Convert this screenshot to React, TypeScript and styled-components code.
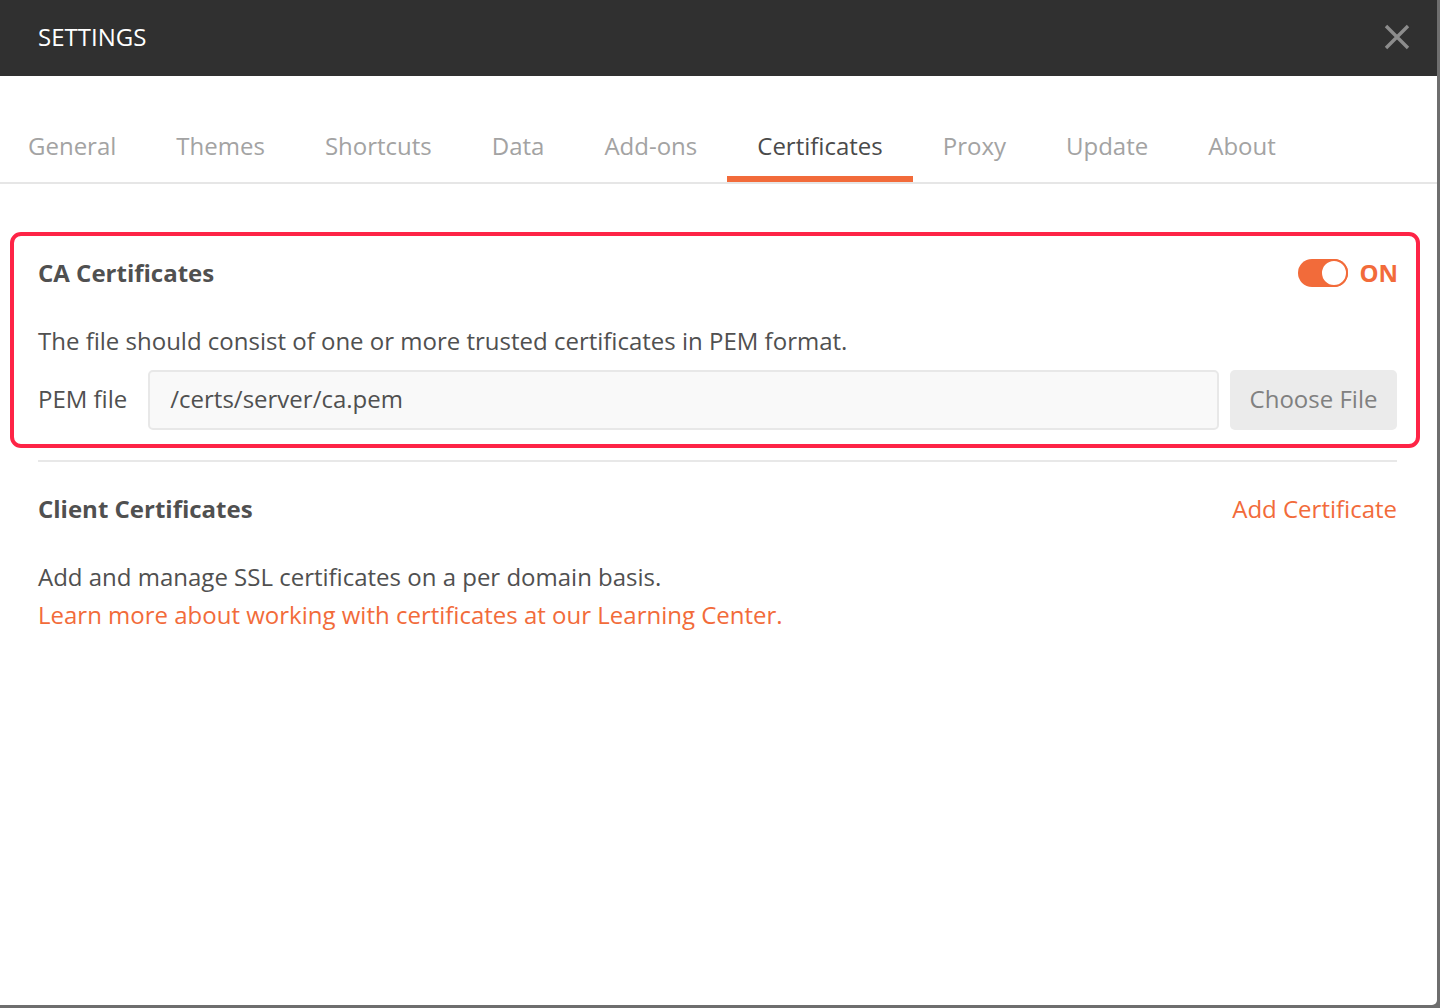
import React from "react";
import styled, { createGlobalStyle } from "styled-components";

const Global = createGlobalStyle`
  html, body { margin: 0; padding: 0; }
  body {
    background: #6e6e6e;
    font-family: "Open Sans", "Noto Sans", sans-serif;
    -webkit-font-smoothing: antialiased;
  }
  * { box-sizing: border-box; }
`;

const Dialog = styled.div`
  width: 1437px;
  height: 1005px;
  background: #ffffff;
  border-bottom-right-radius: 5px;
  display: flex;
  flex-direction: column;
  overflow: hidden;
`;

const Header = styled.header`
  height: 76px;
  background: #303030;
  display: flex;
  align-items: center;
  justify-content: space-between;
  padding: 0 27px 2px 38px;
`;

const Title = styled.h1`
  margin: 0;
  font-size: 24px;
  line-height: 32px;
  font-weight: 400;
  color: #ffffff;
`;

const CloseButton = styled.button`
  width: 26px;
  height: 26px;
  padding: 0;
  border: none;
  background: transparent;
  display: flex;
  align-items: center;
  justify-content: center;
  cursor: pointer;
`;

const TabBar = styled.nav`
  height: 108px;
  display: flex;
  align-items: flex-end;
  padding-left: 0;
  border-bottom: 2px solid #e6e6e6;
`;

const Tab = styled.div<{ $active?: boolean }>`
  padding: 0 30px 15px;
  font-size: 24px;
  line-height: 30px;
  color: ${(p) => (p.$active ? "#4a4a4a" : "#a3a3a3")};
  border-bottom: 6px solid ${(p) => (p.$active ? "#f26b3a" : "transparent")};
  white-space: nowrap;
  cursor: pointer;
  &:first-child {
    margin-left: -2px;
  }
`;

const Content = styled.main`
  padding: 48px 40px 0 38px;
  display: flex;
  flex-direction: column;
  color: #505050;
  font-size: 24px;
`;

const Highlight = styled.section`
  margin: 0 -23px 0 -28px;
  padding: 22px 19px 14px 24px;
  border: 4px solid #fe2446;
  border-radius: 11px;
  display: flex;
  flex-direction: column;
`;

const SectionHead = styled.div`
  display: flex;
  align-items: center;
  justify-content: space-between;
  height: 30px;
`;

const SectionTitle = styled.h2`
  margin: 0;
  font-size: 24px;
  line-height: 30px;
  font-weight: 700;
  color: #505050;
`;

const ToggleWrap = styled.div`
  display: flex;
  align-items: center;
  gap: 11px;
  margin-right: -1px;
`;

const Track = styled.div`
  width: 50px;
  height: 28px;
  border-radius: 14px;
  background: #f26b3a;
  display: flex;
  justify-content: flex-end;
  align-items: center;
`;

const Knob = styled.div`
  width: 28px;
  height: 28px;
  border-radius: 50%;
  background: #ffffff;
  border: 2px solid #f26b3a;
`;

const ToggleLabel = styled.span`
  font-size: 24px;
  line-height: 30px;
  font-weight: 700;
  color: #f26b3a;
`;

const Paragraph = styled.p<{ $top: number }>`
  margin: ${(p) => p.$top}px 0 0;
  font-size: 24px;
  line-height: 30px;
  color: #505050;
`;

const FileRow = styled.div`
  margin-top: 14px;
  display: flex;
  align-items: center;
  height: 60px;
`;

const FieldLabel = styled.label`
  font-size: 24px;
  line-height: 30px;
  color: #505050;
  margin-right: 21px;
  padding-bottom: 3px;
  white-space: nowrap;
`;

const PathInput = styled.div`
  flex: 1;
  height: 60px;
  background: #f9f9f9;
  border: 2px solid #e8e8e8;
  border-radius: 5px;
  display: flex;
  align-items: center;
  padding: 0 0 3px 20px;
  font-size: 24px;
  color: #505050;
`;

const ChooseButton = styled.button`
  margin-left: 11px;
  height: 60px;
  width: 167px;
  border: none;
  border-radius: 5px;
  background: #ebebeb;
  color: #808080;
  font-family: inherit;
  font-size: 24px;
  padding: 0 0 3px;
  cursor: pointer;
`;

const Divider = styled.hr`
  margin: 12px 0 0;
  border: none;
  height: 2px;
  background: #e8e8e8;
`;

const ClientHead = styled(SectionHead)`
  margin-top: 32px;
`;

const TextBlock = styled.div`
  margin-top: 34px;
  font-size: 24px;
  line-height: 38px;
  color: #505050;
`;

const Link = styled.a`
  color: #f26b3a;
  text-decoration: none;
  font-size: 24px;
  line-height: 30px;
  cursor: pointer;
`;

const tabs = [
  "General",
  "Themes",
  "Shortcuts",
  "Data",
  "Add-ons",
  "Certificates",
  "Proxy",
  "Update",
  "About",
];

export default function App() {
  return (
    <>
      <Global />
      <Dialog>
        <Header>
          <Title>SETTINGS</Title>
          <CloseButton aria-label="Close">
            <svg width="26" height="26" viewBox="0 0 26 26">
              <path
                d="M2 2 L24 24 M24 2 L2 24"
                stroke="#8c8c8c"
                strokeWidth="3.4"
                strokeLinecap="butt"
              />
            </svg>
          </CloseButton>
        </Header>
        <TabBar>
          {tabs.map((t) => (
            <Tab key={t} $active={t === "Certificates"}>
              {t}
            </Tab>
          ))}
        </TabBar>
        <Content>
          <Highlight>
            <SectionHead>
              <SectionTitle>CA Certificates</SectionTitle>
              <ToggleWrap>
                <Track>
                  <Knob />
                </Track>
                <ToggleLabel>ON</ToggleLabel>
              </ToggleWrap>
            </SectionHead>
            <Paragraph $top={38}>
              The file should consist of one or more trusted certificates in PEM format.
            </Paragraph>
            <FileRow>
              <FieldLabel>PEM file</FieldLabel>
              <PathInput>/certs/server/ca.pem</PathInput>
              <ChooseButton>Choose File</ChooseButton>
            </FileRow>
          </Highlight>
          <Divider />
          <ClientHead>
            <SectionTitle>Client Certificates</SectionTitle>
            <Link>Add Certificate</Link>
          </ClientHead>
          <TextBlock>
            <div>Add and manage SSL certificates on a per domain basis.</div>
            <Link>Learn more about working with certificates at our Learning Center.</Link>
          </TextBlock>
        </Content>
      </Dialog>
    </>
  );
}
